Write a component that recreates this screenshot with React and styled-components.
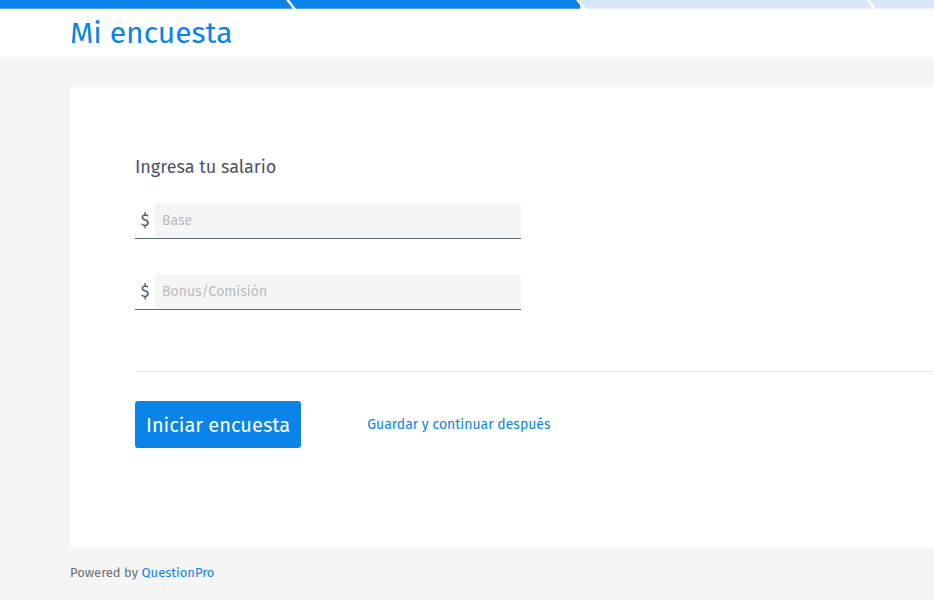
import React from "react";
import styled, { createGlobalStyle } from "styled-components";

const Global = createGlobalStyle`
  html, body { margin: 0; padding: 0; background: #f5f5f5; overflow: hidden; }
  body { font-family: "Fira Sans", Lato, "Open Sans", sans-serif; }
  * { box-sizing: border-box; }
`;

const Page = styled.div`
  width: 100%;
  min-height: 600px;
  overflow: hidden;
  background: #f5f5f5;
`;

const Header = styled.header`
  background: #fff;
  height: 57px;
  display: flex;
  flex-direction: column;
`;

const Progress = styled.div`
  display: flex;
  height: 9px;
  width: 1200px;
  overflow: hidden;
`;

const Segment = styled.div`
  position: relative;
  flex: 0 0 290px;
  background: ${(p) => (p.$done ? "#0a84e8" : "#d6e7fa")};
  border-bottom: 1px solid ${(p) => (p.$done ? "#4ba6f0" : "#e6f0fc")};
  &::after {
    content: "";
    position: absolute;
    z-index: 2;
    right: -2px;
    top: -1px;
    width: 2.5px;
    height: 12px;
    background: #fff;
    transform: skewX(38deg);
  }
`;

const Title = styled.h1`
  margin: 0;
  padding: 0 0 0 70px;
  font-size: 30px;
  font-weight: 400;
  line-height: 48px;
  color: #0a84e8;
`;

const Main = styled.main`
  padding: 30px 0 0 70px;
`;

const Card = styled.section`
  width: 1020px;
  height: 461px;
  background: #fff;
  padding: 69px 0 0 65px;
`;

const Question = styled.div`
  font-size: 18px;
  color: #4b5566;
  margin-bottom: 25px;
`;

const Field = styled.div`
  display: flex;
  align-items: stretch;
  width: 386px;
  height: 36px;
  border-bottom: 1px solid #5d6779;
  margin-bottom: ${(p) => p.$mb || 0}px;
`;

const Currency = styled.span`
  width: 20px;
  display: flex;
  align-items: center;
  justify-content: center;
  font-size: 16px;
  color: #4b5566;
`;

const Input = styled.input`
  flex: 1;
  border: 0;
  outline: none;
  background: #f4f5f5;
  padding: 0 7px;
  font-family: inherit;
  font-size: 14px;
  color: #4b5566;
  &::placeholder { color: #b8bcc0; }
`;

const Divider = styled.hr`
  border: 0;
  border-top: 1px solid #ececec;
  margin: 61px 0 29px;
`;

const Actions = styled.div`
  display: flex;
  align-items: center;
  gap: 66px;
`;

const Button = styled.button`
  height: 47px;
  padding: 0 11px;
  background: #0a84e8;
  color: #fff;
  border: 0;
  border-radius: 3px;
  font-family: inherit;
  font-size: 20px;
  font-weight: 400;
`;

const Link = styled.a`
  color: #0a84e8;
  font-size: 14px;
  font-weight: 400;
  text-decoration: none;
`;

const Footer = styled.footer`
  padding: 17px 0 0 70px;
  font-size: 13px;
  color: #6b6f75;
  & a { color: #0a84e8; text-decoration: none; }
`;

export default function App() {
  return (
    <Page>
      <Global />
      <Header>
        <Progress>
          <Segment $done />
          <Segment $done />
          <Segment />
          <Segment />
        </Progress>
        <Title>Mi encuesta</Title>
      </Header>
      <Main>
        <Card>
          <Question>Ingresa tu salario</Question>
          <Field $mb={35}>
            <Currency>$</Currency>
            <Input placeholder="Base" />
          </Field>
          <Field>
            <Currency>$</Currency>
            <Input placeholder="Bonus/Comisión" />
          </Field>
          <Divider />
          <Actions>
            <Button>Iniciar encuesta</Button>
            <Link href="#">Guardar y continuar después</Link>
          </Actions>
        </Card>
      </Main>
      <Footer>
        Powered by <a href="#">QuestionPro</a>
      </Footer>
    </Page>
  );
}
